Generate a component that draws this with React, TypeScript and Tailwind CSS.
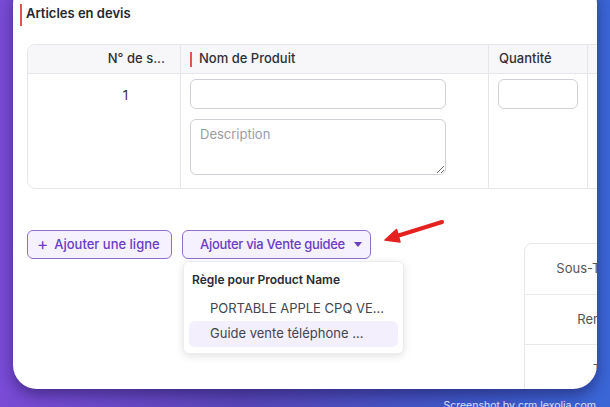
import React from 'react';

const font = { fontFamily: 'Inter, "Noto Sans", sans-serif' };

const Arrow = () => (
  <svg className="absolute left-[370px] top-[205px]" width="80" height="45" viewBox="0 0 80 45">
    <g stroke="#ffffff" strokeWidth="7" strokeLinecap="round" strokeLinejoin="round" fill="#ffffff" opacity="0.9">
      <line x1="72" y1="17" x2="28" y2="31" />
      <polygon points="15,35 30,37 26.5,24.5" />
    </g>
    <g fill="#e5221f" stroke="#e5221f" strokeLinecap="round" strokeLinejoin="round">
      <line x1="72" y1="17" x2="27" y2="31" strokeWidth="4" />
      <polygon points="15,35 30,37 26.5,24.5" strokeWidth="1.5" />
    </g>
  </svg>
);

const TotalsPanel = () => (
  <div className="ml-[153px] mt-[13px] w-[200px] shrink-0 rounded-tl-lg border border-[#e5e7eb] text-[13px] text-[#555]">
    {['Sous-Total', 'Remise', 'Taxe'].map((label, i) => (
      <div key={label} className={`flex ${i === 0 ? 'h-[51px]' : 'h-[50px]'} border-b border-[#e9e9ec]`}>
        <div className="flex w-[110px] items-center justify-end pr-[13px]">{label}</div>
      </div>
    ))}
  </div>
);

export default function App() {
  return (
    <div
      className="relative h-[407px] w-[610px] overflow-hidden bg-[linear-gradient(90deg,#7a4bd6_0%,#5846b8_40%,#3f57c8_75%,#3a66d6_100%)]"
      style={font}
    >
      {/* Card */}
      <div className="relative -mt-[20px] ml-[13px] h-[409px] w-[584px] overflow-hidden rounded-[24px] bg-white shadow-[0_6px_14px_rgba(20,10,60,0.45)]">
        <div className="pt-[24px]">
          {/* Title */}
          <div className="flex h-[22px] items-center pl-[7px]">
            <span className="h-[22px] w-[2px] bg-[#e5534b]" />
            <span className="ml-[4px] -mt-[2px] text-[13px] font-semibold text-[#26262f]">Articles en devis</span>
          </div>

          {/* Table */}
          <div className="ml-[14px] mt-[18px] w-[720px] rounded-lg border border-[#e6e6ea] text-[13px] text-[#2f2f3a]">
            <div className="flex h-[29px] rounded-t-lg border-b border-[#e6e6ea] bg-[#f7f7f9]">
              <div className="flex w-[153px] items-center justify-end border-r border-[#e6e6ea] pr-[15px] font-medium">N° de s...</div>
              <div className="flex w-[308px] items-center border-r border-[#e6e6ea] pl-[9px] font-medium">
                <span className="h-[15px] w-[2px] bg-[#e5534b]" />
                <span className="ml-[7px]">Nom de Produit</span>
              </div>
              <div className="flex w-[99px] items-center border-r border-[#e6e6ea] pl-[10px] font-medium">Quantité</div>
              <div className="flex-1" />
            </div>
            <div className="flex h-[114px]">
              <div className="flex w-[153px] justify-end border-r border-[#e6e6ea] pr-[52px] pt-[12px]">1</div>
              <div className="flex w-[308px] flex-col border-r border-[#e6e6ea] pl-[9px] pt-[5px]">
                <input className="h-[30px] w-[256px] rounded-md border border-[#cfd1d6] bg-white px-2 outline-none" />
                <textarea
                  placeholder="Description"
                  className="mt-[10px] h-[56px] w-[256px] rounded-md border border-[#cfd1d6] bg-white px-[9px] pt-[5px] text-[13px] outline-none placeholder:text-[#9a9ca5]"
                />
              </div>
              <div className="flex w-[99px] items-start border-r border-[#e6e6ea] pl-[9px] pt-[5px]">
                <input className="h-[30px] w-[80px] rounded-md border border-[#cfd1d6] bg-white px-2 outline-none" />
              </div>
              <div className="flex-1" />
            </div>
          </div>

          {/* Buttons + totals */}
          <div className="ml-[14px] mt-[41px] flex w-[720px] items-start">
            <div className="flex gap-[10px]">
              <button className="flex h-[29px] w-[145px] items-center rounded-md border border-[#8f6fcc] bg-[#f6f1fe] pl-[9px] text-[13px] font-medium text-[#6a3dc4]">
                <span className="text-[17px] font-normal leading-none">+</span>
                <span className="ml-[6px]">Ajouter une ligne</span>
              </button>
              <div className="relative">
                <button className="flex h-[29px] w-[189px] items-center rounded-md border border-[#8f6fcc] bg-[#f6f1fe] pl-[17px] text-[13px] font-medium tracking-[-0.3px] text-[#6a3dc4]">
                  <span>Ajouter via Vente guidée</span>
                  <svg className="ml-[9px]" width="8" height="5" viewBox="0 0 8 5">
                    <path d="M0 0h8L4 5z" fill="#6a3dc4" />
                  </svg>
                </button>
                <div className="absolute left-[1px] top-[31px] z-10 h-[93px] w-[221px] rounded-md border border-[#ececf0] bg-white px-[5px] shadow-[0_2px_8px_rgba(0,0,0,0.12)]">
                  <div className="pl-[3px] pt-[9px] text-[12px] font-semibold text-[#2b2b36]">Règle pour Product Name</div>
                  <div className="mt-[10px] pl-[21px] text-[13px] text-[#45454f]">PORTABLE APPLE CPQ VE...</div>
                  <div className="mt-[2px] flex h-[26px] items-center rounded-md bg-[#f3effc] pl-[21px] text-[13px] text-[#45454f]">Guide vente téléphone ...</div>
                </div>
              </div>
            </div>
            <TotalsPanel />
          </div>
        </div>
      </div>

      <div className="mt-[9px] flex justify-end pr-[14px] text-[10.5px] text-[#e3e6fb]">Screenshot by crm.lexolia.com</div>

      <Arrow />
    </div>
  );
}
